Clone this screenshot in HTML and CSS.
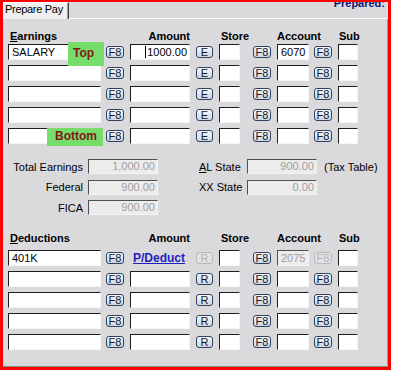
FILE: index.html
```html
<!DOCTYPE html>
<html lang="en">
<head>
    <meta charset="UTF-8">
    <title>Prepare Pay</title>
    <link rel="stylesheet" href="styles.css">
</head>
<body>
    <div class="frame">
        <div class="tabbar">
            <div class="tab">Prepare Pay</div>
            <div class="prepared"><span>Prepared:</span></div>
        </div>
        <div class="panel">
            <section class="earnings">
                <div class="grid head">
                    <div class="h-name"><u>E</u>arnings</div>
                    <div class="h-amount">Amount</div>
                    <div class="h-store">Store</div>
                    <div class="h-account">Account</div>
                    <div class="h-sub">Sub</div>
                </div>
                <div class="rows">
                    <div class="grid row">
                        <div class="field f-name">SALARY</div>
                        <button class="btn f8">F8</button>
                        <div class="field f-amount num"><span class="caret"></span>1000.00</div>
                        <button class="btn small">E</button>
                        <div class="field f-store"></div>
                        <button class="btn f8">F8</button>
                        <div class="field f-account">6070</div>
                        <button class="btn f8">F8</button>
                        <div class="field f-sub"></div>
                    </div>
                    <div class="grid row">
                        <div class="field f-name"></div>
                        <button class="btn f8">F8</button>
                        <div class="field f-amount"></div>
                        <button class="btn small">E</button>
                        <div class="field f-store"></div>
                        <button class="btn f8">F8</button>
                        <div class="field f-account"></div>
                        <button class="btn f8">F8</button>
                        <div class="field f-sub"></div>
                    </div>
                    <div class="grid row">
                        <div class="field f-name"></div>
                        <button class="btn f8">F8</button>
                        <div class="field f-amount"></div>
                        <button class="btn small">E</button>
                        <div class="field f-store"></div>
                        <button class="btn f8">F8</button>
                        <div class="field f-account"></div>
                        <button class="btn f8">F8</button>
                        <div class="field f-sub"></div>
                    </div>
                    <div class="grid row">
                        <div class="field f-name"></div>
                        <button class="btn f8">F8</button>
                        <div class="field f-amount"></div>
                        <button class="btn small">E</button>
                        <div class="field f-store"></div>
                        <button class="btn f8">F8</button>
                        <div class="field f-account"></div>
                        <button class="btn f8">F8</button>
                        <div class="field f-sub"></div>
                    </div>
                    <div class="grid row">
                        <div class="field f-name"></div>
                        <button class="btn f8">F8</button>
                        <div class="field f-amount"></div>
                        <button class="btn small">E</button>
                        <div class="field f-store"></div>
                        <button class="btn f8">F8</button>
                        <div class="field f-account"></div>
                        <button class="btn f8">F8</button>
                        <div class="field f-sub"></div>
                    </div>
                </div>
                <span class="tag tag-top">Top</span>
                <span class="tag tag-bottom">Bottom</span>
            </section>

            <section class="totals">
                <div class="trow">
                    <div class="tlabel">Total Earnings</div>
                    <div class="field ro num">1,000.00</div>
                    <div></div>
                    <div class="slabel"><u>A</u>L State</div>
                    <div class="field ro num">900.00</div>
                    <div class="note">(Tax Table)</div>
                </div>
                <div class="trow">
                    <div class="tlabel">Federal</div>
                    <div class="field ro num">900.00</div>
                    <div></div>
                    <div class="slabel">XX State</div>
                    <div class="field ro num">0.00</div>
                    <div></div>
                </div>
                <div class="trow">
                    <div class="tlabel">FICA</div>
                    <div class="field ro num">900.00</div>
                </div>
            </section>

            <section class="deductions">
                <div class="grid head">
                    <div class="h-name"><u>D</u>eductions</div>
                    <div class="h-amount">Amount</div>
                    <div class="h-store">Store</div>
                    <div class="h-account">Account</div>
                    <div class="h-sub">Sub</div>
                </div>
                <div class="rows">
                    <div class="grid row">
                        <div class="field f-name">401K</div>
                        <button class="btn f8">F8</button>
                        <a class="link" href="#">P/Deduct</a>
                        <button class="btn small off">R</button>
                        <div class="field f-store"></div>
                        <button class="btn f8">F8</button>
                        <div class="field f-account ro">2075</div>
                        <button class="btn f8 off">F8</button>
                        <div class="field f-sub"></div>
                    </div>
                    <div class="grid row">
                        <div class="field f-name"></div>
                        <button class="btn f8">F8</button>
                        <div class="field f-amount"></div>
                        <button class="btn small">R</button>
                        <div class="field f-store"></div>
                        <button class="btn f8">F8</button>
                        <div class="field f-account"></div>
                        <button class="btn f8">F8</button>
                        <div class="field f-sub"></div>
                    </div>
                    <div class="grid row">
                        <div class="field f-name"></div>
                        <button class="btn f8">F8</button>
                        <div class="field f-amount"></div>
                        <button class="btn small">R</button>
                        <div class="field f-store"></div>
                        <button class="btn f8">F8</button>
                        <div class="field f-account"></div>
                        <button class="btn f8">F8</button>
                        <div class="field f-sub"></div>
                    </div>
                    <div class="grid row">
                        <div class="field f-name"></div>
                        <button class="btn f8">F8</button>
                        <div class="field f-amount"></div>
                        <button class="btn small">R</button>
                        <div class="field f-store"></div>
                        <button class="btn f8">F8</button>
                        <div class="field f-account"></div>
                        <button class="btn f8">F8</button>
                        <div class="field f-sub"></div>
                    </div>
                    <div class="grid row">
                        <div class="field f-name"></div>
                        <button class="btn f8">F8</button>
                        <div class="field f-amount"></div>
                        <button class="btn small">R</button>
                        <div class="field f-store"></div>
                        <button class="btn f8">F8</button>
                        <div class="field f-account"></div>
                        <button class="btn f8">F8</button>
                        <div class="field f-sub"></div>
                    </div>
                </div>
            </section>
        </div>
    </div>
</body>
</html>
```

FILE: styles.css
```css
body {
    margin: 0;
    background-color: #fff;
    font-family: "Liberation Sans", Arial, sans-serif;
    font-size: 11px;
    color: #000;
}
.frame {
    width: 391px;
    height: 370px;
    box-sizing: border-box;
    border: 3px solid #f00;
    border-top-width: 2px;
    background-color: #dadadd;
    display: flex;
    flex-direction: column;
}
.tabbar {
    height: 16px;
    flex: none;
    display: flex;
    border-bottom: 1px solid #fff;
}
.tab {
    width: 66px;
    height: 17px;
    box-sizing: border-box;
    margin-bottom: -1px;
    padding-left: 1px;
    background-color: #f0f0f0;
    border-top: 1px solid #fff;
    border-left: 1px solid #fff;
    border-right: 1px solid #404040;
    box-shadow: inset -1px 0 0 #9a9a9a;
    line-height: 12px;
    letter-spacing: -0.3px;
    white-space: nowrap;
}
.prepared {
    margin-left: auto;
    margin-right: 3px;
    height: 8px;
    overflow: hidden;
    color: #101078;
    font-weight: bold;
    line-height: 13px;
}
.prepared span {
    display: block;
    margin-top: -5px;
}
.panel {
    flex: 1;
    padding: 11px 0 0 5px;
    border-right: 1px solid #9c9c9c;
    border-bottom: 1px solid #8c8c8c;
}
.earnings {
    position: relative;
}
.grid {
    display: grid;
    grid-template-columns: 98px 24px 66px 23px 34px 24px 37px 24px 20px;
    align-items: center;
}
.head {
    height: 13px;
    line-height: 13px;
    font-weight: bold;
    white-space: nowrap;
}
.h-name {
    grid-column: 1;
    padding-left: 2px;
}
.h-amount {
    grid-column: 3;
    width: 60px;
    text-align: right;
}
.h-store {
    grid-column: 5;
    padding-left: 2px;
}
.h-account {
    grid-column: 7 / span 2;
}
.h-sub {
    grid-column: 9;
    padding-left: 1px;
}
.rows {
    display: flex;
    flex-direction: column;
    gap: 5px;
    margin-top: 1px;
}
.row {
    height: 16px;
}
.field {
    position: relative;
    height: 16px;
    box-sizing: border-box;
    padding: 0 3px;
    background-color: #fff;
    border: 1px solid;
    border-color: #1e1e1e #f6f6f6 #f6f6f6 #1e1e1e;
    line-height: 14px;
    white-space: nowrap;
    overflow: hidden;
}
.f-name { width: 93px; }
.f-amount { width: 60px; }
.f-store { width: 21px; }
.f-account { width: 32px; }
.f-sub { width: 20px; }
.num {
    text-align: right;
    padding-right: 2px;
}
.caret {
    position: absolute;
    left: 14px;
    top: 1px;
    bottom: 1px;
    width: 1px;
    background-color: #000;
}
.field.ro {
    background-color: #ececec;
    color: #a0a0a0;
    border-color: #505050 #f4f4f4 #f4f4f4 #505050;
}
.btn {
    width: 18px;
    height: 12px;
    box-sizing: border-box;
    padding: 0;
    border: 1px solid #33405c;
    border-radius: 3px;
    background: linear-gradient(#f5f8fc, #cbd5e4);
    font-family: inherit;
    font-size: 11px;
    line-height: 10px;
    color: #10182a;
    text-align: center;
}
.btn.small {
    width: 17px;
}
.btn.off {
    border-color: #b8b8b8;
    background: #e2e2e4;
    color: #b4b4b4;
}
.link {
    padding-left: 3px;
    color: #1f1fbf;
    font-size: 12px;
    font-weight: bold;
    text-decoration: underline;
    white-space: nowrap;
}
.tag {
    position: absolute;
    box-sizing: border-box;
    display: flex;
    align-items: center;
    padding-bottom: 2px;
    background-color: #76dc6a;
    color: #801818;
    font-size: 12px;
    font-weight: bold;
}
.tag-top {
    left: 60px;
    top: 12px;
    width: 36px;
    height: 24px;
    padding-left: 5px;
}
.tag-bottom {
    left: 39px;
    top: 98px;
    width: 56px;
    height: 18px;
    padding-left: 8px;
}
.totals {
    display: flex;
    flex-direction: column;
    gap: 5.5px;
    margin-top: 15px;
}
.trow {
    display: grid;
    grid-template-columns: 80px 70px 41px 48px 70px auto;
    align-items: center;
    height: 15px;
}
.trow .field {
    height: 15px;
    line-height: 13px;
}
.tlabel {
    text-align: right;
    padding-right: 5px;
    white-space: nowrap;
}
.slabel {
    white-space: nowrap;
}
.note {
    padding-left: 7px;
    white-space: nowrap;
}
.deductions {
    margin-top: 17px;
}
.deductions .rows {
    margin-top: 5px;
}
```
